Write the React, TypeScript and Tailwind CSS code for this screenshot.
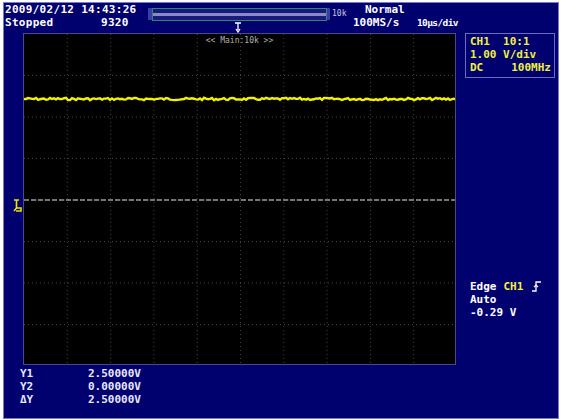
import React from 'react';

const GRID_W = 433;
const GRID_H = 332;

// deterministic noise so the trace looks the same every render
function tracePoints() {
  const pts: string[] = [];
  let seed = 7;
  for (let x = 0; x <= GRID_W; x += 2) {
    seed = (seed * 9301 + 49297) % 233280;
    const n = (seed / 233280 - 0.5) * 2.4;
    pts.push(`${x},${(65 + n).toFixed(1)}`);
  }
  return pts.join(' ');
}

function Graticule() {
  const vLines = Array.from({ length: 9 }, (_, i) => ((i + 1) * GRID_W) / 10);
  const hLines = Array.from({ length: 7 }, (_, i) => ((i + 1) * GRID_H) / 8);

  return (
    <div className="relative w-[433px] h-[332px] bg-black border border-[#4a4a86] shrink-0">
      <svg width={GRID_W - 2} height={GRID_H - 2} className="block">
        {vLines.map((x) => (
          <line key={`v${x}`} x1={x} y1={0} x2={x} y2={GRID_H} stroke="#444444" strokeWidth={1} strokeDasharray="1 3" />
        ))}
        {hLines.map((y) => (
          <line key={`h${y}`} x1={0} y1={y} x2={GRID_W} y2={y} stroke="#444444" strokeWidth={1} strokeDasharray="1 3" />
        ))}
        {/* trigger level */}
        <line x1={0} y1={166} x2={GRID_W} y2={166} stroke="#9a9a9a" strokeWidth={1.5} strokeDasharray="5 2" />
        {/* CH1 trace */}
        <polyline points={tracePoints()} fill="none" stroke="#f2f000" strokeWidth={2.4} />
      </svg>
      <div className="absolute top-[2px] left-0 right-0 text-center text-[8px] leading-[10px] text-[#b0b0b0] font-normal">
        {'<< Main:10k >>'}
      </div>
    </div>
  );
}

function RecordBar() {
  return (
    <div className="flex items-center h-[14px] mt-[4px]">
      <div className="w-[4px] h-[12px] bg-[#3c3ca8]" />
      <div className="w-[175px] h-[13px] border border-[#2a8a6a] bg-[#1a1a7a] flex items-center">
        <div className="w-full h-[3px] bg-[#8a8ac8]" />
      </div>
      <div className="w-[3px] h-[12px] bg-[#3c3ca8]" />
      <span className="ml-[2px] text-[8px] leading-[10px] text-[#c8c8e8] font-normal">10k</span>
    </div>
  );
}

function TriggerMark() {
  return (
    <svg width="9" height="13" viewBox="0 0 9 13">
      <path d="M1 1 H6 M3.5 1 V9 M3.5 9 L1 12 M3.5 9 H8 V12 H3" stroke="#e8e800" strokeWidth="1.6" fill="none" />
    </svg>
  );
}

function EdgeIcon() {
  return (
    <svg width="10" height="11" viewBox="0 0 10 11">
      <path d="M0 10 H4 V1 H9" stroke="#ffffff" strokeWidth="1.3" fill="none" />
      <path d="M2 6 L4 4 L6 6" stroke="#ffffff" strokeWidth="1.1" fill="none" />
    </svg>
  );
}

export default function App() {
  return (
    <div className="w-[565px] h-[420px] bg-white pl-[3px] pt-[2px] overflow-hidden">
      <div
        className="w-[556px] h-[417px] bg-[#00006e] border border-[#7a7ac8] flex flex-col text-white font-bold text-[11px] leading-[13px] whitespace-pre"
        style={{ fontFamily: '"DejaVu Sans Mono", "Liberation Mono", monospace' }}
      >
        {/* status header */}
        <div className="h-[30px] flex shrink-0">
          <div className="w-[144px] pl-[1px] flex flex-col tracking-[0.3px]">
            <span>2009/02/12 14:43:26</span>
            <div className="flex">
              <span className="w-[96px]">Stopped</span>
              <span>9320</span>
            </div>
          </div>
          <div className="w-[202px] flex flex-col">
            <RecordBar />
            <div className="ml-[86px] mt-[1px]">
              <svg width="8" height="11" viewBox="0 0 8 11">
                <path d="M1 1 H7 M4 1 V8 M2 7 L4 10 L6 7" stroke="#ffffff" strokeWidth="1.3" fill="none" />
              </svg>
            </div>
          </div>
          <div className="flex-1 flex flex-col">
            <span className="pl-[15px]">Normal</span>
            <div className="flex pl-[3px]">
              <span className="w-[64px]">100MS/s</span>
              <span className="text-[9.5px] tracking-[-0.6px]">10µs/div</span>
            </div>
          </div>
        </div>

        {/* screen row */}
        <div className="flex h-[332px] shrink-0">
          <div className="w-[19px] flex flex-col pt-[166px] pl-[9px]">
            <TriggerMark />
          </div>
          <Graticule />
          <div className="flex-1 flex flex-col pl-[9px]">
            <div className="w-[90px] h-[45px] border border-[#6a6ac4] text-[#f0f040] pl-[4px] pt-[1px] flex flex-col">
              <span>{'CH1  10:1'}</span>
              <span>1.00 V/div</span>
              <div className="flex justify-between pr-[3px]">
                <span>DC</span>
                <span>100MHz</span>
              </div>
            </div>
            <div className="mt-[202px] pl-[5px] flex flex-col">
              <div className="flex items-center">
                <span>Edge</span>
                <span className="ml-[7px] text-[#f0f040]">CH1</span>
                <span className="ml-[9px]">
                  <EdgeIcon />
                </span>
              </div>
              <span>Auto</span>
              <span>-0.29 V</span>
            </div>
          </div>
        </div>

        {/* cursor readout */}
        <div className="flex flex-col pl-[16px] pt-[2px] text-[#e8e8ff]">
          <div className="flex">
            <span className="w-[68px]">Y1</span>
            <span>2.50000V</span>
          </div>
          <div className="flex">
            <span className="w-[68px]">Y2</span>
            <span>0.00000V</span>
          </div>
          <div className="flex">
            <span className="w-[68px]">ΔY</span>
            <span>2.50000V</span>
          </div>
        </div>
      </div>
    </div>
  );
}
